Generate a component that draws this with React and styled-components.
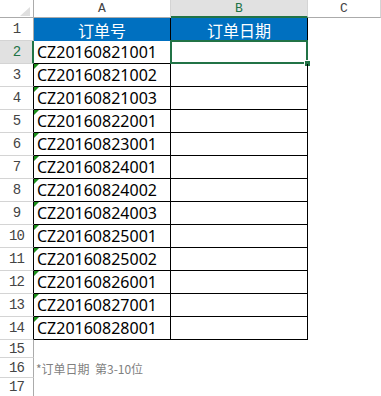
import React from 'react';
import styled, {createGlobalStyle} from 'styled-components';

const GlobalStyle=createGlobalStyle`
  html, body {
    margin: 0;
    padding: 0;
    background: #fff;
  }
`;

const GREEN="#217346";
const GRID="#d4d4d4";
const HEAD_LINE="#ababab";

const orders=[
  "CZ20160821001",
  "CZ20160821002",
  "CZ20160821003",
  "CZ20160822001",
  "CZ20160823001",
  "CZ20160824001",
  "CZ20160824002",
  "CZ20160824003",
  "CZ20160825001",
  "CZ20160825002",
  "CZ20160826001",
  "CZ20160827001",
  "CZ20160828001"
];

const columns=[
  {name: "A", width: 137},
  {name: "B", width: 137, selected: true},
  {name: "C", width: 73}
];

export default function App(){
  return(
    <Sheet>
      <GlobalStyle/>
      <HeaderRow>
        <Corner/>
        {columns.map(col=>(
          <ColHeader key={col.name} $width={col.width} $selected={col.selected}>{col.name}</ColHeader>
        ))}
      </HeaderRow>

      <Row $height={23}>
        <RowHeader $edge={HEAD_LINE}>1</RowHeader>
        <TitleCell $width={137}>订单号</TitleCell>
        <TitleCell $width={137}>订单日期</TitleCell>
      </Row>

      {orders.map((order, i)=>{
        const num=i+2;
        const active=num===2;
        return(
          <Row key={order} $height={23}>
            <RowHeader $selected={active} $edge={active ? GREEN : "#000"}>{num}</RowHeader>
            <Cell $width={137} $flag={!active}>{order}</Cell>
            <Cell $width={137}>
              {active && (
                <Selection>
                  <Handle/>
                </Selection>
              )}
            </Cell>
          </Row>
        );
      })}

      <Row $height={18}>
        <RowHeader $edge={HEAD_LINE}>15</RowHeader>
        <Blank/>
      </Row>
      <Row $height={20}>
        <RowHeader $edge={HEAD_LINE}>16</RowHeader>
        <Blank>
          <Note>*订单日期&nbsp;&nbsp;第3-10位</Note>
        </Blank>
      </Row>
      <Row $height={19}>
        <RowHeader $edge={HEAD_LINE}>17</RowHeader>
        <Blank/>
      </Row>
    </Sheet>
  );
}

const Sheet=styled.div`
  width: 381px;
  height: 396px;
  overflow: hidden;
  background: #fff;
  display: flex;
  flex-direction: column;
`;

const HeaderRow=styled.div`
  display: flex;
  height: 18px;
  flex: 0 0 auto;
`;

const Corner=styled.div`
  position: relative;
  width: 34px;
  box-sizing: border-box;
  border-right: 1px solid ${HEAD_LINE};
  border-bottom: 1px solid ${HEAD_LINE};
  background: #fff;

  &::after {
    content: "";
    position: absolute;
    right: 3px;
    bottom: 1px;
    width: 0;
    height: 0;
    border-left: 10px solid transparent;
    border-bottom: 9px solid #dfdfdf;
  }
`;

const ColHeader=styled.div`
  width: ${p=>p.$width}px;
  box-sizing: border-box;
  display: flex;
  align-items: center;
  justify-content: center;
  border-right: 1px solid ${GRID};
  border-bottom: ${p=>p.$selected ? `2px solid ${GREEN}` : `1px solid ${HEAD_LINE}`};
  background: ${p=>p.$selected ? "#e1e1e1" : "#fff"};
  color: ${p=>p.$selected ? GREEN : "#444"};
  font-family: "Liberation Mono", monospace;
  font-size: 13px;
  line-height: 1;
  padding-top: ${p=>p.$selected ? "1px" : "0"};
`;

const Row=styled.div`
  display: flex;
  height: ${p=>p.$height}px;
  flex: 0 0 auto;
`;

const RowHeader=styled.div`
  width: 34px;
  flex: 0 0 34px;
  box-sizing: border-box;
  display: flex;
  align-items: center;
  justify-content: center;
  border-right: ${p=>p.$selected ? "2px" : "1px"} solid ${p=>p.$edge};
  border-bottom: 1px solid ${GRID};
  background: ${p=>p.$selected ? "#e1e1e1" : "#fff"};
  color: ${p=>p.$selected ? GREEN : "#444"};
  font-family: "Liberation Mono", monospace;
  font-size: 14px;
  letter-spacing: -1px;
  padding-left: ${p=>p.$selected ? "1px" : "0"};
`;

const TitleCell=styled.div`
  width: ${p=>p.$width}px;
  box-sizing: border-box;
  display: flex;
  align-items: center;
  justify-content: center;
  background: #0070c0;
  border-right: 1px solid #000;
  color: #fff;
  font-family: "Noto Sans CJK SC", sans-serif;
  font-size: 16px;
`;

const Cell=styled.div`
  position: relative;
  width: ${p=>p.$width}px;
  box-sizing: border-box;
  display: flex;
  align-items: center;
  padding-left: 3px;
  border-right: 1px solid #000;
  border-bottom: 1px solid #000;
  color: #000;
  font-family: "Noto Sans", sans-serif;
  font-size: 16px;
  white-space: nowrap;

  ${p=>p.$flag && `
    &::before {
      content: "";
      position: absolute;
      left: 0;
      top: 0;
      border-top: 5px solid #1b8f1b;
      border-right: 5px solid transparent;
    }
  `}
`;

const Selection=styled.div`
  position: absolute;
  top: -1px;
  left: -1px;
  right: -1px;
  bottom: -1px;
  border: 2px solid ${GREEN};
`;

const Handle=styled.div`
  position: absolute;
  right: -5px;
  bottom: -5px;
  width: 5px;
  height: 5px;
  background: ${GREEN};
  border: 1px solid #fff;
`;

const Blank=styled.div`
  flex: 1 1 auto;
  display: flex;
  align-items: center;
  padding-left: 2px;
`;

const Note=styled.span`
  color: #7f7f7f;
  font-family: "Noto Sans CJK SC", sans-serif;
  font-size: 12px;
  white-space: nowrap;
`;
